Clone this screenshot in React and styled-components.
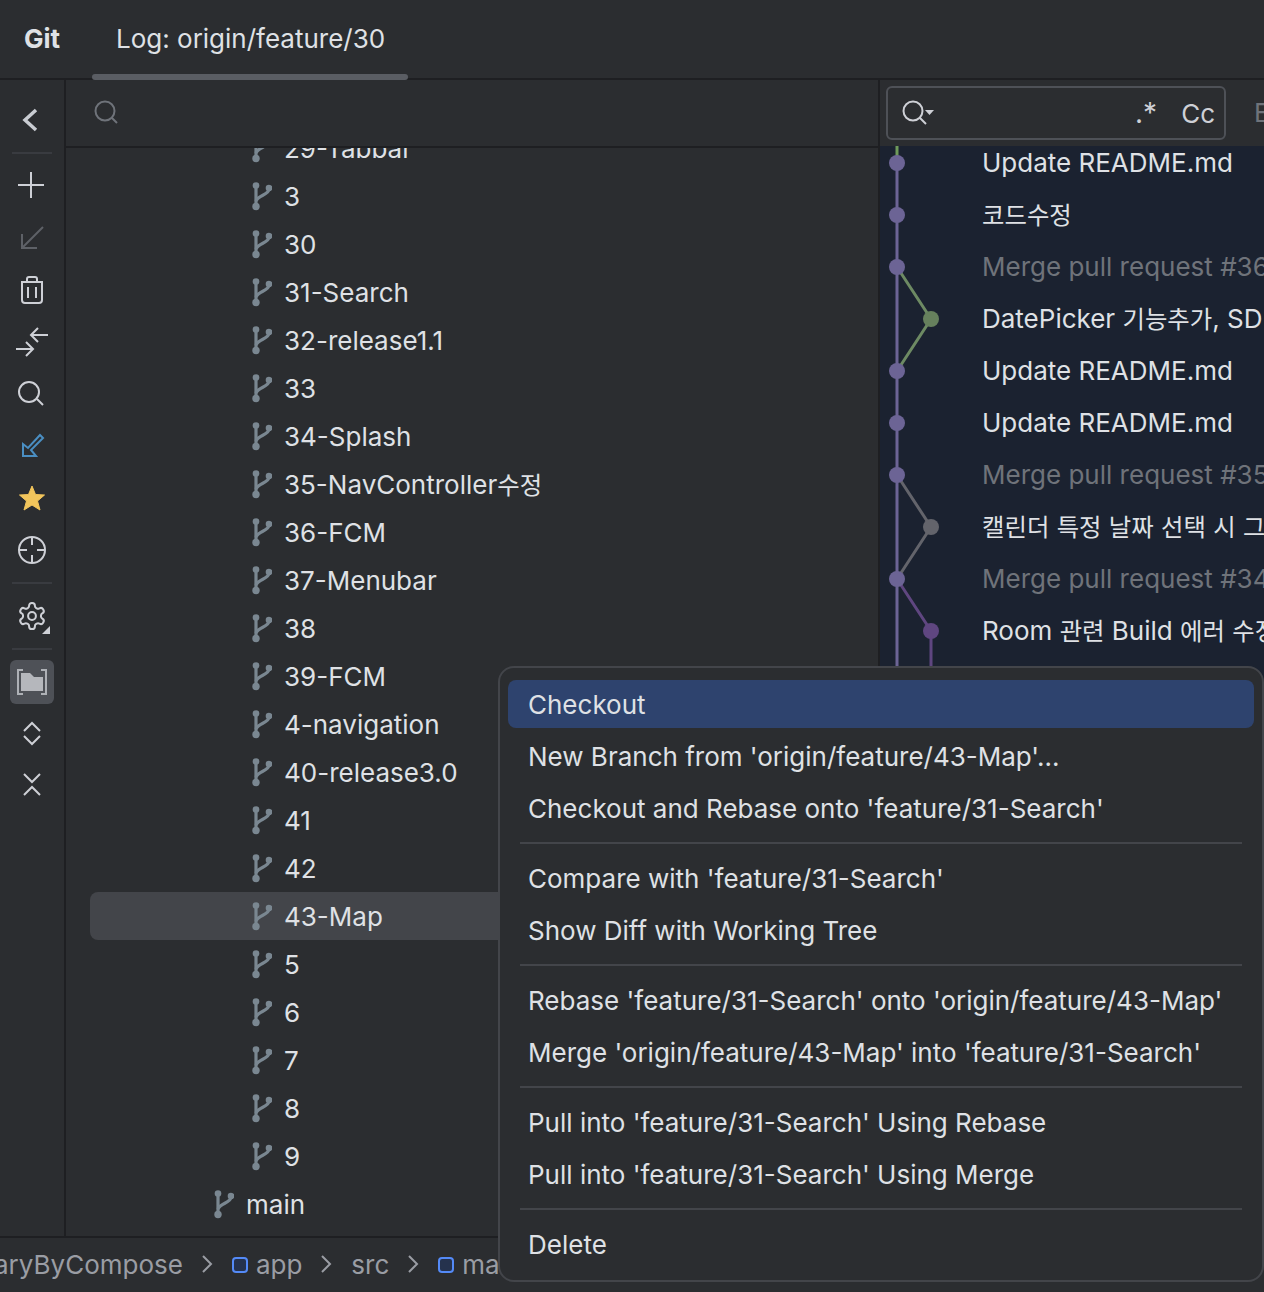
import React from "react";
import styled, { createGlobalStyle } from "styled-components";

const Global = createGlobalStyle`
  html, body { margin: 0; padding: 0; background: #2b2d30; }
  * { box-sizing: border-box; }
`;

const Root = styled.div`
  position: relative;
  width: 1264px;
  height: 1292px;
  overflow: hidden;
  display: flex;
  flex-direction: column;
  background: #2b2d30;
  color: #dfe1e5;
  font-family: Inter, "Noto Sans CJK KR", sans-serif;
  font-size: 26px;
  white-space: nowrap;
`;

const Hangul = styled.span`
  font-size: 24.4px;
  line-height: 1;
`;

const TopBar = styled.header`
  height: 80px;
  flex: none;
  display: flex;
  align-items: center;
  border-bottom: 2px solid #1e1f22;
  padding-left: 24px;
`;
const Title = styled.div`
  font-weight: 700;
  width: 68px;
  margin-top: -2px;
  color: #dfe1e5;
`;
const Tab = styled.div`
  position: relative;
  height: 78px;
  width: 316px;
  padding-left: 24px;
  display: flex;
  align-items: center;
  padding-bottom: 2px;
  &::after {
    content: "";
    position: absolute;
    left: 0;
    right: 0;
    bottom: -2px;
    height: 6px;
    border-radius: 3px;
    background: #5a5d63;
  }
`;

const Main = styled.div`
  flex: 1;
  min-height: 0;
  display: flex;
`;

const Toolbar = styled.nav`
  width: 66px;
  flex: none;
  border-right: 2px solid #1e1f22;
  padding-top: 14px;
  display: flex;
  flex-direction: column;
  align-items: center;
`;
const ToolButton = styled.div`
  width: 44px;
  height: 52px;
  display: flex;
  align-items: center;
  justify-content: center;
  svg {
    display: block;
    border-radius: 6px;
    background: ${(p) => (p.$active ? "#4e5157" : "transparent")};
  }
`;
const ToolSep = styled.div`
  width: 40px;
  height: 14px;
  flex: none;
  display: flex;
  align-items: center;
  &::before {
    content: "";
    width: 100%;
    height: 2px;
    background: #393b40;
  }
`;

const Center = styled.section`
  width: 814px;
  flex: none;
  border-right: 2px solid #1e1f22;
  display: flex;
  flex-direction: column;
`;
const TreeSearch = styled.div`
  height: 68px;
  flex: none;
  border-bottom: 2px solid #1e1f22;
  padding-left: 26px;
  display: flex;
  align-items: center;
`;
const Tree = styled.div`
  flex: 1;
  min-height: 0;
  overflow: hidden;
`;
const TreeInner = styled.div`
  margin-top: -24px;
  padding-left: 24px;
`;
const Row = styled.div`
  height: 48px;
  display: flex;
  align-items: center;
  gap: 12px;
  padding-left: ${(p) => (p.$depth === 0 ? 124 : 162)}px;
  border-radius: 8px 0 0 8px;
  background: ${(p) => (p.$selected ? "#43454a" : "transparent")};
`;

const LogPanel = styled.section`
  flex: 1;
  min-width: 0;
  display: flex;
  flex-direction: column;
  overflow: hidden;
`;
const LogHeader = styled.div`
  height: 66px;
  flex: none;
  padding: 6px 0 0 6px;
  display: flex;
  gap: 28px;
  align-items: flex-start;
`;
const SearchBox = styled.div`
  width: 340px;
  height: 54px;
  flex: none;
  border: 2px solid #4e5157;
  border-radius: 6px;
  display: flex;
  align-items: center;
  padding: 0 9px 0 14px;
  color: #ced0d6;
`;
const Regex = styled.span`
  margin-left: auto;
  margin-right: 24px;
  font-size: 28px;
`;
const FilterLabel = styled.span`
  color: #6f737a;
  line-height: 54px;
`;
const LogBody = styled.div`
  flex: 1;
  min-height: 0;
  display: flex;
  background: #1b2230;
  overflow: hidden;
`;
const Messages = styled.div`
  margin-top: -9px;
  display: flex;
  flex-direction: column;
`;
const Message = styled.div`
  height: 52px;
  line-height: 52px;
  color: ${(p) => (p.$dim ? "#6f737a" : "#dfe1e5")};
`;

const StatusBar = styled.footer`
  height: 56px;
  flex: none;
  border-top: 2px solid #1e1f22;
  display: flex;
  align-items: center;
  padding-bottom: 2px;
  color: #9a9da4;
`;
const Crumb = styled.span`
  display: flex;
  align-items: center;
  gap: 8px;
`;
const FirstCrumb = styled(Crumb)`
  margin-left: -6px;
`;
const CrumbBox = styled.i`
  width: 16px;
  height: 16px;
  border: 2px solid #548af7;
  border-radius: 4px;
  background: #25324d;
  display: block;
  margin-top: 2px;
`;
const CrumbArrow = styled.svg`
  width: 14px;
  height: 20px;
  margin: 0 18px 0 17px;
  flex: none;
`;

const Popup = styled.div`
  position: absolute;
  left: 498px;
  top: 666px;
  width: 766px;
  height: 616px;
  background: #2b2d30;
  border: 2px solid #43454a;
  border-radius: 16px;
  padding: 12px 8px;
  display: flex;
  flex-direction: column;
  gap: 4px;
`;
const Item = styled.div`
  height: 48px;
  flex: none;
  display: flex;
  align-items: center;
  padding-left: 20px;
  border-radius: 8px;
  background: ${(p) => (p.$active ? "#2e436e" : "transparent")};
`;
const ItemSep = styled.div`
  height: 14px;
  flex: none;
  margin: 0 12px;
  display: flex;
  align-items: center;
  &::before {
    content: "";
    width: 100%;
    height: 2px;
    background: #43454a;
  }
`;

const Ko = ({ children }) => (
  <span>
    {children.split(/([\uac00-\ud7a3]+)/).map((part, i) =>
      /[\uac00-\ud7a3]/.test(part) ? <Hangul key={i}>{part}</Hangul> : part
    )}
  </span>
);

const Ico = ({ children }) => (
  <svg width="44" height="44" viewBox="0 0 44 44" fill="none" stroke="#ced0d6" strokeWidth="2">
    {children}
  </svg>
);

const BranchIcon = () => (
  <svg width="20" height="30" viewBox="0 0 20 30" style={{ flex: "none" }} fill="#7a8791" stroke="#7a8791">
    <path d="M4 5V25" strokeWidth="3.2" fill="none" />
    <path d="M17 8C17 14 6 14 4 20" strokeWidth="3.2" fill="none" />
    <circle cx="4" cy="4.5" r="3.3" stroke="none" />
    <circle cx="4" cy="25.5" r="3.7" stroke="none" />
    <circle cx="17" cy="7" r="3.3" stroke="none" />
  </svg>
);

const branches = ["29-Tabbar","3","30","31-Search","32-release1.1","33","34-Splash","35-NavController수정","36-FCM","37-Menubar","38","39-FCM","4-navigation","40-release3.0","41","42","43-Map","5","6","7","8","9"];

const messages = [
  ["Update README.md"],
  ["코드수정"],
  ["Merge pull request #36", true],
  ["DatePicker 기능추가, SDK"],
  ["Update README.md"],
  ["Update README.md"],
  ["Merge pull request #35", true],
  ["캘린더 특정 날짜 선택 시 그"],
  ["Merge pull request #34", true],
  ["Room 관련 Build 에러 수정"],
];

const menu = [
  ["Checkout", "New Branch from 'origin/feature/43-Map'...", "Checkout and Rebase onto 'feature/31-Search'"],
  ["Compare with 'feature/31-Search'", "Show Diff with Working Tree"],
  ["Rebase 'feature/31-Search' onto 'origin/feature/43-Map'", "Merge 'origin/feature/43-Map' into 'feature/31-Search'"],
  ["Pull into 'feature/31-Search' Using Rebase", "Pull into 'feature/31-Search' Using Merge"],
  ["Delete"],
];

const Graph = () => {
  const dots = [17, 69, 121, 225, 277, 329, 433];
  return (
    <svg width="102" height="1090" viewBox="0 0 102 1090" style={{ flex: "none" }} fill="none" strokeWidth="3">
      <path d="M17 0V17" stroke="#6f9a5a" />
      <path d="M17 17V530" stroke="#6c6495" />
      <path d="M17 121L51 173L17 225" stroke="#6d8a63" />
      <path d="M17 329L51 381L17 433" stroke="#63646b" />
      <path d="M17 433L51 485V530" stroke="#5f4680" />
      {dots.map((y) => <circle key={y} cx="17" cy={y} r="8" fill="#6c6495" stroke="none" />)}
      <circle cx="51" cy="173" r="8" fill="#66805d" stroke="none" />
      <circle cx="51" cy="381" r="8" fill="#63646b" stroke="none" />
      <circle cx="51" cy="485" r="8" fill="#5f4680" stroke="none" />
    </svg>
  );
};

const Arrow = () => (
  <CrumbArrow viewBox="0 0 14 20" fill="none" stroke="#9a9da4" strokeWidth="2">
    <path d="M3 2L11 10L3 18" />
  </CrumbArrow>
);

export default function App() {
  return (
    <Root>
      <Global />
      <TopBar>
        <Title>Git</Title>
        <Tab>Log: origin/feature/30</Tab>
      </TopBar>
      <Main>
        <Toolbar>
          <ToolButton><Ico><path d="M26 12L15 22L26 32" strokeWidth="3.5" stroke="#c9ccd2" /></Ico></ToolButton>
          <ToolSep />
          <ToolButton><Ico><path d="M21 8V34M8 21H34" /></Ico></ToolButton>
          <ToolButton><Ico><path d="M33 11L12 32M12 18V32H27" stroke="#5e6167" /></Ico></ToolButton>
          <ToolButton><Ico><path d="M11 14H33M17 14V11C17 10 18 9 19 9H25C26 9 27 10 27 11V14M12 14V32C12 34 13 35 15 35H29C31 35 32 34 32 32V14M18 19V30M26 19V30" /></Ico></ToolButton>
          <ToolButton><Ico><path d="M38 15H21M28 8L21 15L28 22M6 29H23M16 22L23 29L16 36" /></Ico></ToolButton>
          <ToolButton><Ico><circle cx="19" cy="20" r="10" /><path d="M27 27L33 33" /></Ico></ToolButton>
          <ToolButton><Ico><path d="M30 11L33 14L21 26L26 32H13V20L18 24Z" stroke="#4a8ec2" /></Ico></ToolButton>
          <ToolButton><Ico><polygon points="22,10 25.5,18.5 34.5,19 27.5,25 30,34 22,29 14,34 16.5,25 9.5,19 18.5,18.5" fill="#f2c55c" stroke="#f2c55c" strokeLinejoin="round" strokeWidth="1" /></Ico></ToolButton>
          <ToolButton><Ico><circle cx="22" cy="22" r="13" /><path d="M22 9V17M22 27V35M9 22H17M27 22H35" /></Ico></ToolButton>
          <ToolSep />
          <ToolButton>
            <Ico>
              <g transform="translate(6.4 6.4) scale(1.3)" strokeWidth="1.55">
                <path d="M12.22 2h-.44a2 2 0 0 0-2 2v.18a2 2 0 0 1-1 1.73l-.43.25a2 2 0 0 1-2 0l-.15-.08a2 2 0 0 0-2.73.73l-.22.38a2 2 0 0 0 .73 2.73l.15.1a2 2 0 0 1 1 1.72v.51a2 2 0 0 1-1 1.74l-.15.09a2 2 0 0 0-.73 2.73l.22.38a2 2 0 0 0 2.73.73l.15-.08a2 2 0 0 1 2 0l.43.25a2 2 0 0 1 1 1.73V20a2 2 0 0 0 2 2h.44a2 2 0 0 0 2-2v-.18a2 2 0 0 1 1-1.73l.43-.25a2 2 0 0 1 2 0l.15.08a2 2 0 0 0 2.73-.73l.22-.39a2 2 0 0 0-.73-2.73l-.15-.08a2 2 0 0 1-1-1.74v-.5a2 2 0 0 1 1-1.74l.15-.09a2 2 0 0 0 .73-2.73l-.22-.38a2 2 0 0 0-2.73-.73l-.15.08a2 2 0 0 1-2 0l-.43-.25a2 2 0 0 1-1-1.73V4a2 2 0 0 0-2-2z" />
                <circle cx="12" cy="12" r="3" />
              </g>
              <polygon points="40,32 40,40 32,40" fill="#ced0d6" stroke="none" />
            </Ico>
          </ToolButton>
          <ToolSep />
          <ToolButton $active>
            <Ico>
              <path d="M13 10H8V34H13M31 10H36V34H31" stroke="#aeb1b6" />
              <path d="M11 13H20L24 17H33V31H11Z" fill="#b5b7bc" stroke="none" />
            </Ico>
          </ToolButton>
          <ToolButton><Ico><path d="M14 19L22 11L30 19M14 24L22 32L30 24" /></Ico></ToolButton>
          <ToolButton><Ico><path d="M14 10L22 18L30 10M14 31L22 23L30 31" /></Ico></ToolButton>
        </Toolbar>

        <Center>
          <TreeSearch>
            <svg width="28" height="28" viewBox="0 0 28 28" fill="none" stroke="#6f737a" strokeWidth="2">
              <circle cx="13" cy="12" r="9.5" /><path d="M20 19L25 24" />
            </svg>
          </TreeSearch>
          <Tree>
            <TreeInner>
              {branches.map((b) => (
                <Row key={b} $selected={b === "43-Map"}><BranchIcon /><Ko>{b}</Ko></Row>
              ))}
              <Row $depth={0}><BranchIcon />main</Row>
            </TreeInner>
          </Tree>
        </Center>

        <LogPanel>
          <LogHeader>
            <SearchBox>
              <svg width="36" height="30" viewBox="0 0 36 30" fill="none" stroke="#ced0d6" strokeWidth="2" style={{ flex: "none" }}>
                <circle cx="11" cy="13" r="9.5" /><path d="M18 20L24 26" />
                <polygon points="23,12 32,12 27.5,17" fill="#ced0d6" stroke="none" />
              </svg>
              <Regex>.*</Regex>
              <span>Cc</span>
            </SearchBox>
            <FilterLabel>E</FilterLabel>
          </LogHeader>
          <LogBody>
            <Graph />
            <Messages>
              {messages.map(([t, d], i) => <Message key={i} $dim={d}><Ko>{t}</Ko></Message>)}
            </Messages>
          </LogBody>
        </LogPanel>
      </Main>
      <StatusBar>
        <FirstCrumb>aryByCompose</FirstCrumb>
        <Arrow />
        <Crumb><CrumbBox />app</Crumb>
        <Arrow />
        <Crumb>src</Crumb>
        <Arrow />
        <Crumb><CrumbBox />ma</Crumb>
      </StatusBar>

      <Popup>
        {menu.map((group, g) => (
          <React.Fragment key={g}>
            {g > 0 && <ItemSep />}
            {group.map((t) => <Item key={t} $active={t === "Checkout"}>{t}</Item>)}
          </React.Fragment>
        ))}
      </Popup>
    </Root>
  );
}
